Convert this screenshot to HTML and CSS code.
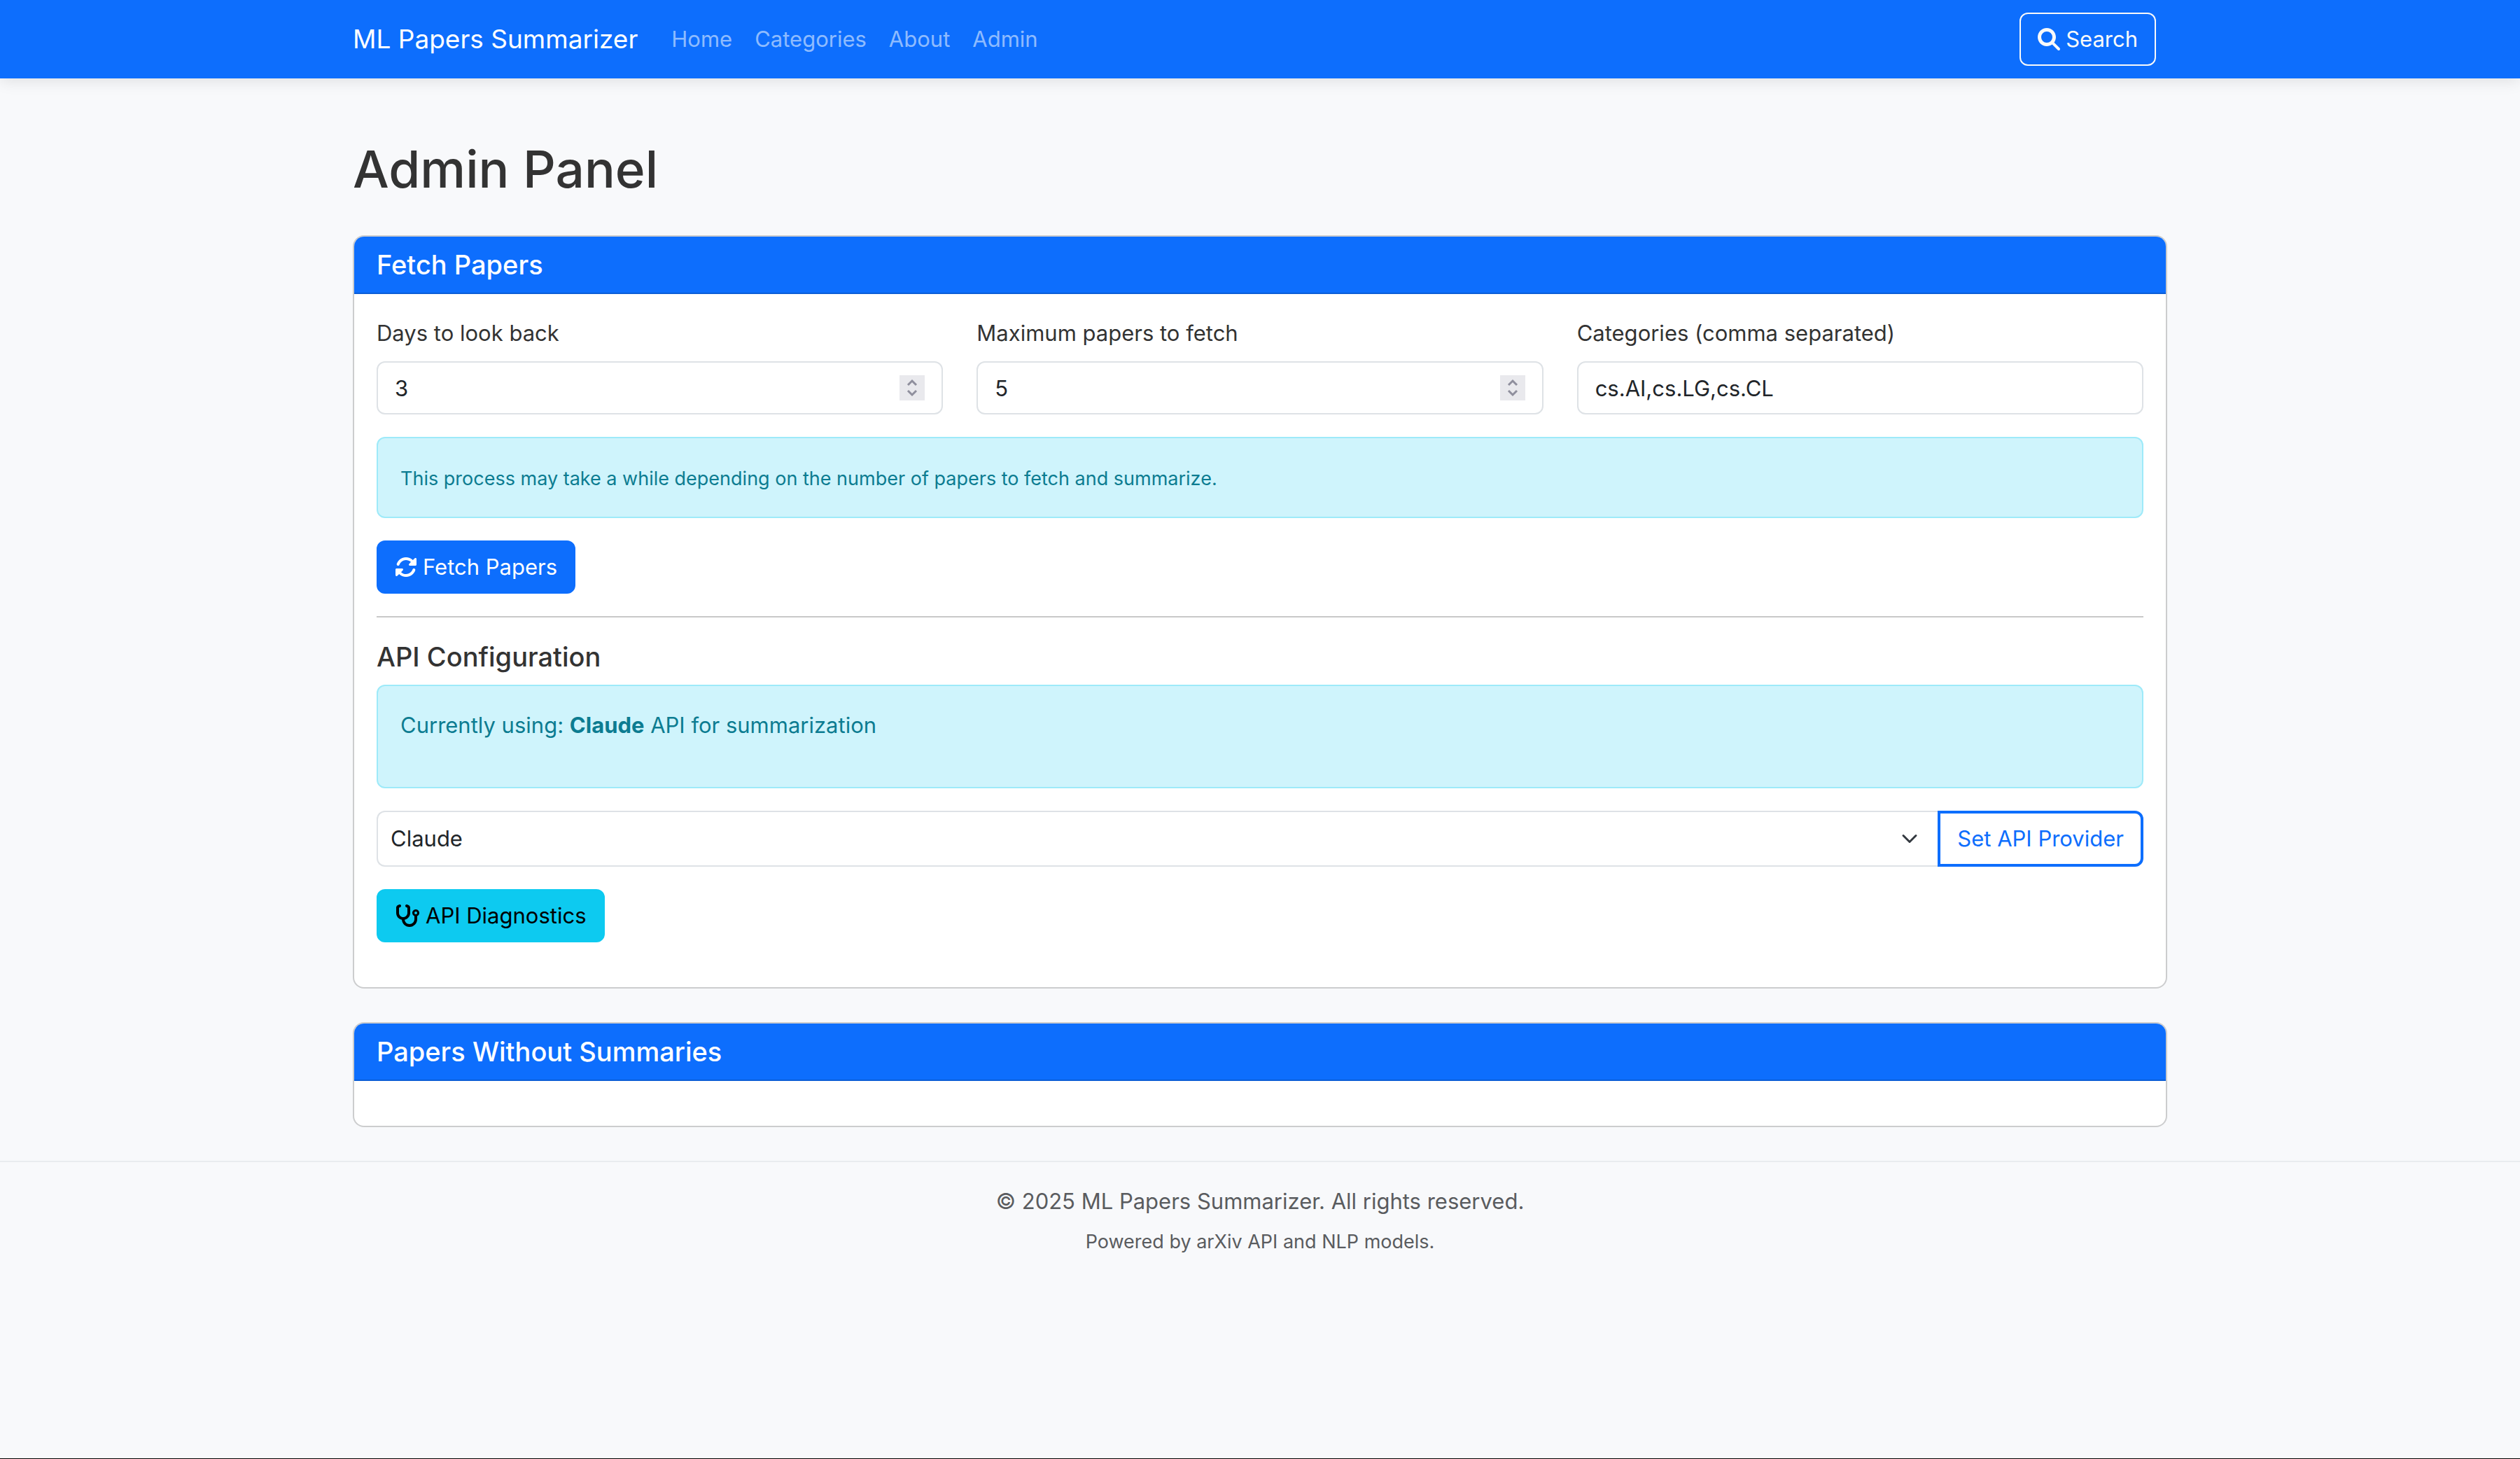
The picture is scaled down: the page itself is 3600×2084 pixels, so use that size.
FILE: index.html
```html
<!DOCTYPE html>
<html lang="en">
<head>
<meta charset="utf-8">
<meta name="viewport" content="width=device-width, initial-scale=1">
<title>Admin Panel - ML Papers Summarizer</title>
<link rel="stylesheet" href="styles.css">
</head>
<body>
<nav class="navbar">
  <div class="container navbar-inner">
    <a class="navbar-brand" href="#">ML Papers Summarizer</a>
    <ul class="navbar-nav">
      <li><a class="nav-link" href="#">Home</a></li>
      <li><a class="nav-link" href="#">Categories</a></li>
      <li><a class="nav-link" href="#">About</a></li>
      <li><a class="nav-link" href="#">Admin</a></li>
    </ul>
    <button class="btn btn-outline-light" type="button">
      <svg class="icon" viewBox="0 0 512 512" aria-hidden="true"><path d="M416 208c0 45.9-14.9 88.3-40 122.7L502.6 457.4c12.5 12.5 12.5 32.8 0 45.3s-32.8 12.5-45.3 0L330.7 376c-34.4 25.2-76.8 40-122.7 40C93.1 416 0 322.9 0 208S93.1 0 208 0S416 93.1 416 208zM208 336a128 128 0 1 0 0-256 128 128 0 1 0 0 256z"/></svg>
      <span>Search</span>
    </button>
  </div>
</nav>

<main class="container main">
  <h1 class="page-title">Admin Panel</h1>

  <section class="card">
    <h2 class="card-header">Fetch Papers</h2>
    <div class="card-body">
      <form class="form">
        <div class="form-row">
          <div class="field">
            <label class="form-label" for="days">Days to look back</label>
            <input class="form-control form-number" id="days" type="number" value="3">
          </div>
          <div class="field">
            <label class="form-label" for="max-papers">Maximum papers to fetch</label>
            <input class="form-control form-number" id="max-papers" type="number" value="5">
          </div>
          <div class="field">
            <label class="form-label" for="categories">Categories (comma separated)</label>
            <input class="form-control" id="categories" type="text" value="cs.AI,cs.LG,cs.CL">
          </div>
        </div>
        <div class="alert"><small class="small">This process may take a while depending on the number of papers to fetch and summarize.</small></div>
        <button class="btn btn-primary" type="button">
          <svg class="icon" viewBox="0 0 512 512" aria-hidden="true"><path d="M142.9 142.9c62.2-62.2 162.7-62.5 225.3-1L327 183c-6.9 6.9-8.9 17.2-5.2 26.2s12.5 14.8 22.2 14.8H463.5c0 0 0 0 0 0H472c13.3 0 24-10.7 24-24V72c0-9.7-5.8-18.5-14.8-22.2s-19.3-1.7-26.2 5.2L413.4 96.6c-87.6-86.5-228.7-86.2-315.8 1C73.2 122 55.6 150.7 44.8 181.4c-5.9 16.7 2.9 34.9 19.5 40.8s34.9-2.9 40.8-19.5c7.7-21.8 20.2-42.3 37.8-59.8zM16 312v7.6 .7V440c0 9.7 5.8 18.5 14.8 22.2s19.3 1.7 26.2-5.2l41.6-41.6c87.6 86.5 228.7 86.2 315.8-1c24.4-24.4 42.1-53.1 52.9-83.7c5.9-16.7-2.9-34.9-19.5-40.8s-34.9 2.9-40.8 19.5c-7.7 21.8-20.2 42.3-37.8 59.8c-62.2 62.2-162.7 62.5-225.3 1L185 329c6.9-6.9 8.9-17.2 5.2-26.2s-12.5-14.8-22.2-14.8H48.4h-.7H40c-13.3 0-24 10.7-24 24z"/></svg>
          <span>Fetch Papers</span>
        </button>
      </form>

      <hr class="divider">

      <h3 class="section-title">API Configuration</h3>
      <div class="alert"><p class="alert-text">Currently using: <strong>Claude</strong> API for summarization</p></div>
      <form class="input-group">
        <select class="form-select" aria-label="API provider">
          <option selected>Claude</option>
          <option>OpenAI</option>
        </select>
        <button class="btn btn-outline-primary" type="button">Set API Provider</button>
      </form>
      <div class="actions">
        <button class="btn btn-info" type="button">
          <svg class="icon icon-wide" viewBox="0 0 576 512" aria-hidden="true"><path d="M142.4 21.9c5.6 16.8-3.5 34.9-20.2 40.5L96 71.1V192c0 53 43 96 96 96s96-43 96-96V71.1l-26.1-8.7c-16.8-5.6-25.8-23.7-20.2-40.5s23.7-25.8 40.5-20.2l26.1 8.7C334.4 19.1 352 43.5 352 71.1V192c0 77.2-54.6 141.6-127.3 156.7C231 404.6 278.4 448 336 448c61.9 0 112-50.1 112-112V265.3c-28.3-12.3-48-40.5-48-73.3c0-44.2 35.8-80 80-80s80 35.8 80 80c0 32.8-19.7 61-48 73.3V336c0 97.2-78.8 176-176 176c-92.9 0-168.9-71.9-175.5-163.1C87.2 334.2 32 269.6 32 192V71.1c0-27.5 17.6-52 43.8-60.7l26.1-8.7c16.8-5.6 34.9 3.5 40.5 20.2zM480 224a32 32 0 1 0 0-64 32 32 0 1 0 0 64z"/></svg>
          <span>API Diagnostics</span>
        </button>
      </div>
    </div>
  </section>

  <section class="card">
    <h2 class="card-header">Papers Without Summaries</h2>
    <div class="card-body"></div>
  </section>
</main>

<footer class="footer">
  <p class="footer-text">© 2025 ML Papers Summarizer. All rights reserved.</p>
  <p class="footer-text"><small class="small">Powered by arXiv API and NLP models.</small></p>
</footer>
</body>
</html>
```
FILE: styles.css
```css
:root {
  --blue: #0d6efd;
  --text: #333;
  --border: #dee2e6;
}

*, *::before, *::after { box-sizing: border-box; }

body {
  margin: 0;
  min-height: 100vh;
  background: #f8f9fb;
  border-bottom: 1px solid #000;
  color: var(--text);
  font-family: Inter, "Liberation Sans", sans-serif;
  font-size: 31px;
  line-height: 48px;
}

h1, h2, h3, p, ul { margin: 0; padding: 0; }

button, input, select { margin: 0; font: inherit; }

.container {
  max-width: 2640px;
  margin: 0 auto;
  padding: 0 24px;
}

.small {
  font-size: 27px;
  line-height: 1;
}

/* Navigation */
.navbar {
  padding: 16px 0;
  background: var(--blue);
  box-shadow: 0 4px 20px rgba(0, 0, 0, .1);
}

.navbar-inner {
  display: flex;
  align-items: center;
  height: 80px;
}

.navbar-brand {
  margin-right: 32px;
  color: #fff;
  font-size: 37px;
  text-decoration: none;
}

.navbar-nav {
  display: flex;
  flex: 1;
  list-style: none;
}

.nav-link {
  padding: 16px;
  color: rgba(255, 255, 255, .55);
  text-decoration: none;
}

.navbar .btn { margin-right: 16px; }

/* Buttons */
.btn {
  display: inline-flex;
  align-items: center;
  gap: 8px;
  padding: 12px 24px;
  border: 2px solid transparent;
  border-radius: 12px;
  background: none;
  white-space: nowrap;
  cursor: pointer;
}

.btn-outline-light { border-color: #f8f9fa; color: #f8f9fa; }
.btn-primary { border-color: var(--blue); background: var(--blue); color: #fff; }
.btn-info { border-color: #0dcaf0; background: #0dcaf0; color: #000; }

.btn-outline-primary {
  border: 4px solid var(--blue);
  border-radius: 0 12px 12px 0;
  color: var(--blue);
}

.icon {
  width: 32px;
  height: 32px;
  fill: currentColor;
}

.icon-wide { width: 36px; }

/* Cards */
.main { padding-top: 82px; }

.page-title {
  margin-bottom: 46px;
  font-size: 73px;
  font-weight: 500;
  line-height: 96px;
}

.card {
  margin-bottom: 48px;
  overflow: hidden;
  background: #fff;
  background-clip: padding-box;
  border: 2px solid rgba(0, 0, 0, .175);
  border-radius: 16px;
}

.card-header {
  padding: 16px 32px;
  background: var(--blue);
  border-bottom: 2px solid #0b5ed7;
  color: #fff;
  font-size: 38px;
  font-weight: 500;
}

.card-body { padding: 32px; }

/* Forms */
.form-row {
  display: grid;
  grid-template-columns: repeat(3, 1fr);
  gap: 48px;
}

.field {
  display: flex;
  flex-direction: column;
  gap: 16px;
}

.form-control {
  width: 100%;
  height: 76px;
  padding: 12px 24px;
  background: #fff;
  border: 2px solid var(--border);
  border-radius: 12px;
  color: #212529;
}

.form-number {
  appearance: textfield;
  background: #fff url("data:image/svg+xml,%3Csvg xmlns='http://www.w3.org/2000/svg' viewBox='0 0 36 36'%3E%3Cpath fill='%23e9e9ed' d='M0 0h36v36H0z'/%3E%3Cpath fill='none' stroke='%238f8f9d' stroke-width='3' d='M12 14l6-6 6 6M12 22l6 6 6-6'/%3E%3C/svg%3E") no-repeat right 24px center / 36px 36px;
}

.form-number::-webkit-inner-spin-button { appearance: none; }

.alert {
  margin: 32px 0;
  padding: 32px;
  background: #cff4fc;
  border: 2px solid #9eeaf9;
  border-radius: 12px;
  color: #0c7c91;
}

.alert-text { margin-bottom: 32px; }

.divider {
  margin: 32px 0;
  border: 0;
  border-top: 2px solid #c8c8c8;
}

.section-title {
  margin-bottom: 16px;
  font-size: 38px;
  font-weight: 500;
}

.section-title + .alert { margin-top: 0; }

.input-group { display: flex; }

.form-select {
  flex: 1;
  min-width: 0;
  height: 80px;
  padding: 12px 72px 12px 18px;
  appearance: none;
  background: #fff url("data:image/svg+xml,%3Csvg xmlns='http://www.w3.org/2000/svg' viewBox='0 0 16 16'%3E%3Cpath fill='none' stroke='%23343a40' stroke-linecap='round' stroke-linejoin='round' stroke-width='2' d='m2 5 6 6 6-6'/%3E%3C/svg%3E") no-repeat right 24px center / 32px 24px;
  border: 2px solid var(--border);
  border-right: 0;
  border-radius: 12px 0 0 12px;
  color: #212529;
}

.actions { margin: 32px 0; }

.actions .btn, .form .btn { display: flex; }

/* Footer */
.footer {
  display: flex;
  flex-direction: column;
  gap: 8px;
  padding: 32px 24px;
  border-top: 2px solid #e9ecef;
  color: #5a5c5f;
  text-align: center;
}
```
